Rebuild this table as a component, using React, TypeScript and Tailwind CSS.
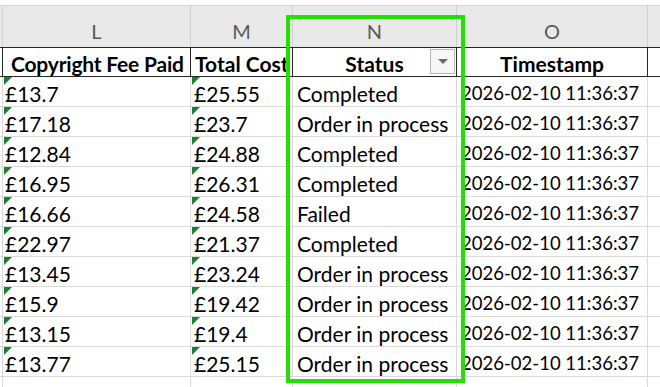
import React from 'react'

const rows = [
  { fee: '£13.7', total: '£25.55', status: 'Completed' },
  { fee: '£17.18', total: '£23.7', status: 'Order in process' },
  { fee: '£12.84', total: '£24.88', status: 'Completed' },
  { fee: '£16.95', total: '£26.31', status: 'Completed' },
  { fee: '£16.66', total: '£24.58', status: 'Failed' },
  { fee: '£22.97', total: '£21.37', status: 'Completed' },
  { fee: '£13.45', total: '£23.24', status: 'Order in process' },
  { fee: '£15.9', total: '£19.42', status: 'Order in process' },
  { fee: '£13.15', total: '£19.4', status: 'Order in process' },
  { fee: '£13.77', total: '£25.15', status: 'Order in process' },
]

const stamp = '2026-02-10 11:36:37'

// widths: gutter, L, M, N, O, rest
const cols = 'grid grid-cols-[3px_188px_102px_164px_191px_12px]'

function Flag() {
  return <div className="absolute left-px top-0 w-[8px] h-[8px] bg-[#1a7f2e] [clip-path:polygon(0_0,100%_0,0_100%)]" />
}

export default function App() {
  return (
    <div className="relative w-[660px] h-[387px] overflow-hidden bg-white text-black font-['Lato','Liberation_Sans',sans-serif]">
      <div className="h-[6px] bg-white border-b border-[#d4d4d4]" />

      {/* column letters */}
      <div className={`${cols} h-[41px] bg-[#e9e9e9] text-[20px] text-[#595959]`}>
        <div className="border-r border-[#d0d0d0]" />
        <div className="flex items-center justify-center pt-[8px] border-r border-[#d0d0d0]">L</div>
        <div className="flex items-center justify-center pt-[8px] border-r border-[#d0d0d0]">M</div>
        <div className="flex items-center justify-center pt-[8px] border-r border-[#d0d0d0]">N</div>
        <div className="flex items-center justify-center pt-[8px] border-r border-[#d0d0d0]">O</div>
        <div />
      </div>

      {/* header row */}
      <div className={`${cols} h-[30px] border-y border-[#262626] text-[21px] font-bold leading-none`}>
        <div className="border-r border-[#262626]" />
        <div className="flex items-center pl-[8px] pt-[2px] border-r border-[#262626] whitespace-nowrap overflow-hidden tracking-[-0.2px]">Copyright Fee Paid</div>
        <div className="flex items-center pl-[4px] pt-[2px] border-r border-[#262626] whitespace-nowrap overflow-hidden">Total Cost</div>
        <div className="relative flex items-center justify-center pt-[2px] border-r border-[#262626]">
          Status
          <div className="absolute right-[1px] top-[1px] w-[25px] h-[25px] border border-[#b5b5b5] bg-[#f7f7f7] flex items-center justify-center">
            <div className="w-0 h-0 border-l-[5px] border-r-[5px] border-t-[5px] border-l-transparent border-r-transparent border-t-[#6b6b6b]" />
          </div>
        </div>
        <div className="flex items-center justify-center pt-[2px] border-r border-[#262626]">Timestamp</div>
        <div />
      </div>

      {/* data rows */}
      {rows.map((r, i) => (
        <div key={i} className={`${cols} h-[30px] border-b border-[#dadada] text-[21px] leading-none`}>
          <div className="border-r border-[#dadada]" />
          <div className="relative flex items-center pl-[2px] pt-[3px] border-r border-[#dadada]">
            <Flag />
            {r.fee}
          </div>
          <div className="relative flex items-center pl-[3px] pt-[3px] border-r border-[#dadada]">
            <Flag />
            {r.total}
          </div>
          <div className="flex items-center pl-[4px] pt-[3px] border-r border-[#dadada] whitespace-nowrap overflow-hidden">{r.status}</div>
          <div className="flex items-center justify-end pr-[8px] pt-[3px] border-r border-[#dadada] whitespace-nowrap text-[18.5px]">{stamp}</div>
          <div />
        </div>
      ))}
      <div className={`${cols} h-[30px]`}>
        <div className="border-r border-[#dadada]" />
        <div className="border-r border-[#dadada]" />
        <div className="border-r border-[#dadada]" />
        <div className="border-r border-[#dadada]" />
        <div className="border-r border-[#dadada]" />
        <div />
      </div>

      {/* selection highlight */}
      <div className="absolute left-[286px] top-[15px] w-[179px] h-[368px] border-[4px] border-[#22e000] pointer-events-none" />
    </div>
  )
}
